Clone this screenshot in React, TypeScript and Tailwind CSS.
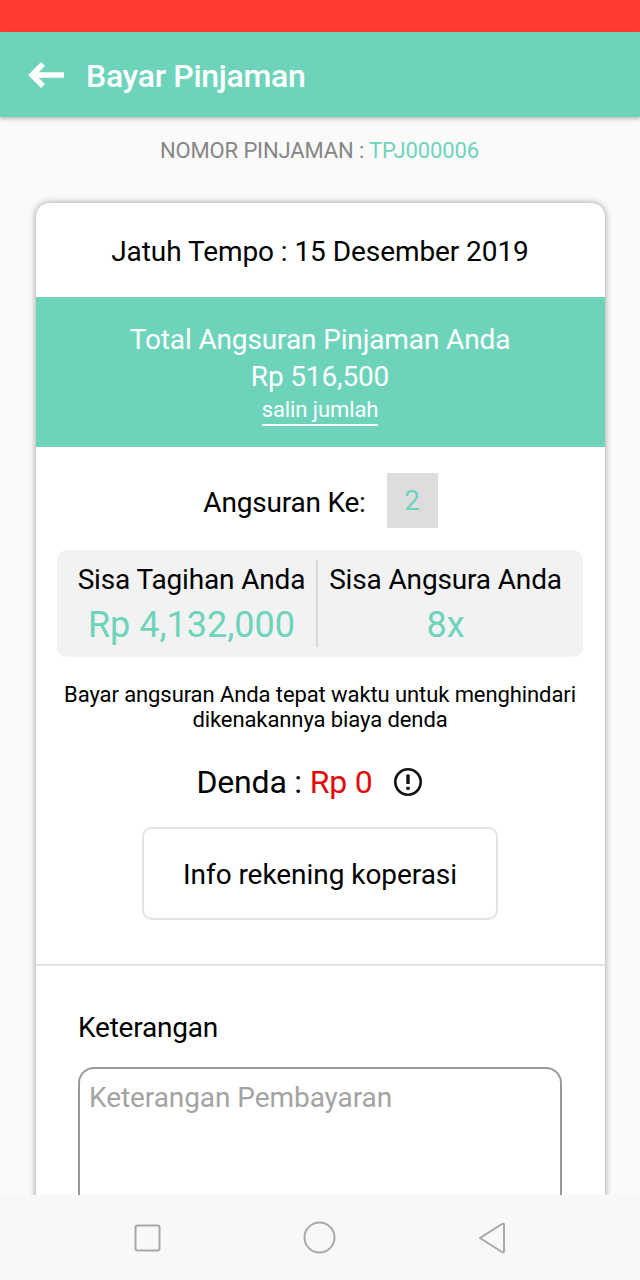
export default function App() {
  return (
    <div className="h-[1280px] w-[640px] overflow-hidden flex flex-col bg-[#fafafa] font-['Roboto',sans-serif] text-black">
      <div className="h-8 shrink-0 bg-[#ff3b30]" />
      <header className="relative z-10 h-[85px] shrink-0 bg-[#6dd4bb] flex items-center pl-[27px] gap-[21px] shadow-[0_2px_4px_rgba(0,0,0,0.25)]">
        <svg width="38" height="28" viewBox="0 0 38 28" fill="none" stroke="#fff" strokeWidth="5.5">
          <path d="M37 14H5" />
          <path d="M16 3L5 14l11 11" />
        </svg>
        <h1 className="pt-[3px] text-[32px] font-medium text-white tracking-[-0.3px] leading-none">Bayar Pinjaman</h1>
      </header>
      <main className="flex-1 min-h-0 overflow-hidden">
        <p className="mt-[21px] pr-[1px] text-center text-[22px] leading-[26px] text-[#868686] tracking-[-0.13px]">
          NOMOR PINJAMAN : <span className="text-[#6dd4bb]">TPJ000006</span>
        </p>
        <section className="mt-[39px] mx-[36px] w-[569px] bg-white rounded-t-[14px] shadow-[0_0_7px_rgba(0,0,0,0.4)] pb-10">
          <div className="h-[94px] pt-[4px] pr-[1px] flex items-center justify-center text-[28px] tracking-[-0.07px]">
            Jatuh Tempo : 15 Desember 2019
          </div>
          <div className="h-[150px] bg-[#6dd4bb] flex flex-col items-center pt-[25px] pr-[1px] text-white">
            <p className="text-[28px] leading-[36px] tracking-[-0.13px]">Total Angsuran Pinjaman Anda</p>
            <p className="text-[28px] leading-[38px] tracking-[-0.15px]">Rp 516,500</p>
            <p className="text-[22px] leading-[28px] border-b-2 border-white tracking-[-0.1px]">salin jumlah</p>
          </div>
          <div className="mt-[26px] flex items-center justify-center gap-[21px]">
            <span className="pt-[5px] text-[28px] tracking-[-0.2px]">Angsuran Ke:</span>
            <span className="w-[51px] h-[55px] bg-[#dddddd] flex items-center justify-center text-[28px] text-[#6dd4bb]">2</span>
          </div>
          <div className="mt-[22px] ml-[21px] mr-[22px] h-[107px] rounded-[10px] bg-[#f2f2f2] flex items-center">
            <div className="w-[260px] pl-[9px] flex flex-col items-center">
              <span className="text-[28px] leading-[40px] tracking-[-0.15px] pt-[1px]">Sisa Tagihan Anda</span>
              <span className="text-[36px] leading-[46px] text-[#6dd4bb] pt-[2px]">Rp 4,132,000</span>
            </div>
            <div className="w-[2px] h-[87px] bg-[#d9d9d9] -ml-[1px]" />
            <div className="flex-1 pr-[10px] flex flex-col items-center">
              <span className="text-[28px] leading-[40px] tracking-[-0.15px] pt-[1px]">Sisa Angsura Anda</span>
              <span className="text-[36px] leading-[46px] text-[#6dd4bb] pt-[2px]">8x</span>
            </div>
          </div>
          <p className="mt-[25px] pr-[1px] text-center text-[22px] leading-[25px] tracking-[-0.09px]">
            Bayar angsuran Anda tepat waktu untuk menghindari
            <br />
            dikenakannya biaya denda
          </p>
          <div className="mt-[28px] pr-[21px] flex items-center justify-center gap-[21px]">
            <span className="text-[32px] leading-[44px] tracking-[-0.2px]">
              Denda : <span className="text-[#e30b0b]">Rp 0</span>
            </span>
            <svg width="30" height="30" viewBox="0 0 30 30" fill="none" stroke="#111" strokeWidth="2.6">
              <circle cx="15" cy="15" r="12.7" />
              <path d="M15 7.5v9.5" strokeWidth="3.4" />
              <path d="M15 19.8v3" strokeWidth="3.4" />
            </svg>
          </div>
          <div className="mt-[23px] ml-[106px] w-[356px] h-[93px] pt-[3px] rounded-[10px] border-2 border-[#e3e3e3] flex items-center justify-center text-[28px] tracking-[-0.05px]">
            Info rekening koperasi
          </div>
          <div className="mt-[44px] h-[2px] bg-[#e3e3e3]" />
          <div className="mt-[45px] pl-[42px] pr-[43px]">
            <label className="block text-[28px] leading-[34px] tracking-[-0.2px]">Keterangan</label>
            <div className="mt-[22px] h-[160px] rounded-[16px] border-2 border-[#999999] px-[9px] pt-[12px] text-[28px] leading-[34px] text-[#a3a3a3] tracking-[-0.07px]">
              Keterangan Pembayaran
            </div>
          </div>
        </section>
      </main>
      <nav className="relative z-10 h-[85px] shrink-0 bg-[#f8f8f8] flex items-center justify-center">
        <div className="w-[372px] flex items-center justify-between">
          <svg width="27" height="28" viewBox="0 0 27 28" fill="none" stroke="#a8a8a8" strokeWidth="2">
            <rect x="1.5" y="1.5" width="24" height="25" rx="2" />
          </svg>
          <svg width="33" height="33" viewBox="0 0 33 33" fill="none" stroke="#a8a8a8" strokeWidth="2">
            <circle cx="16.5" cy="16.5" r="15" />
          </svg>
          <svg width="28" height="32" viewBox="0 0 28 32" fill="none" stroke="#a8a8a8" strokeWidth="2" strokeLinejoin="round">
            <path d="M2 16L24 2q2-1 2 1v26q0 2-2 1z" />
          </svg>
        </div>
      </nav>
    </div>
  );
}
